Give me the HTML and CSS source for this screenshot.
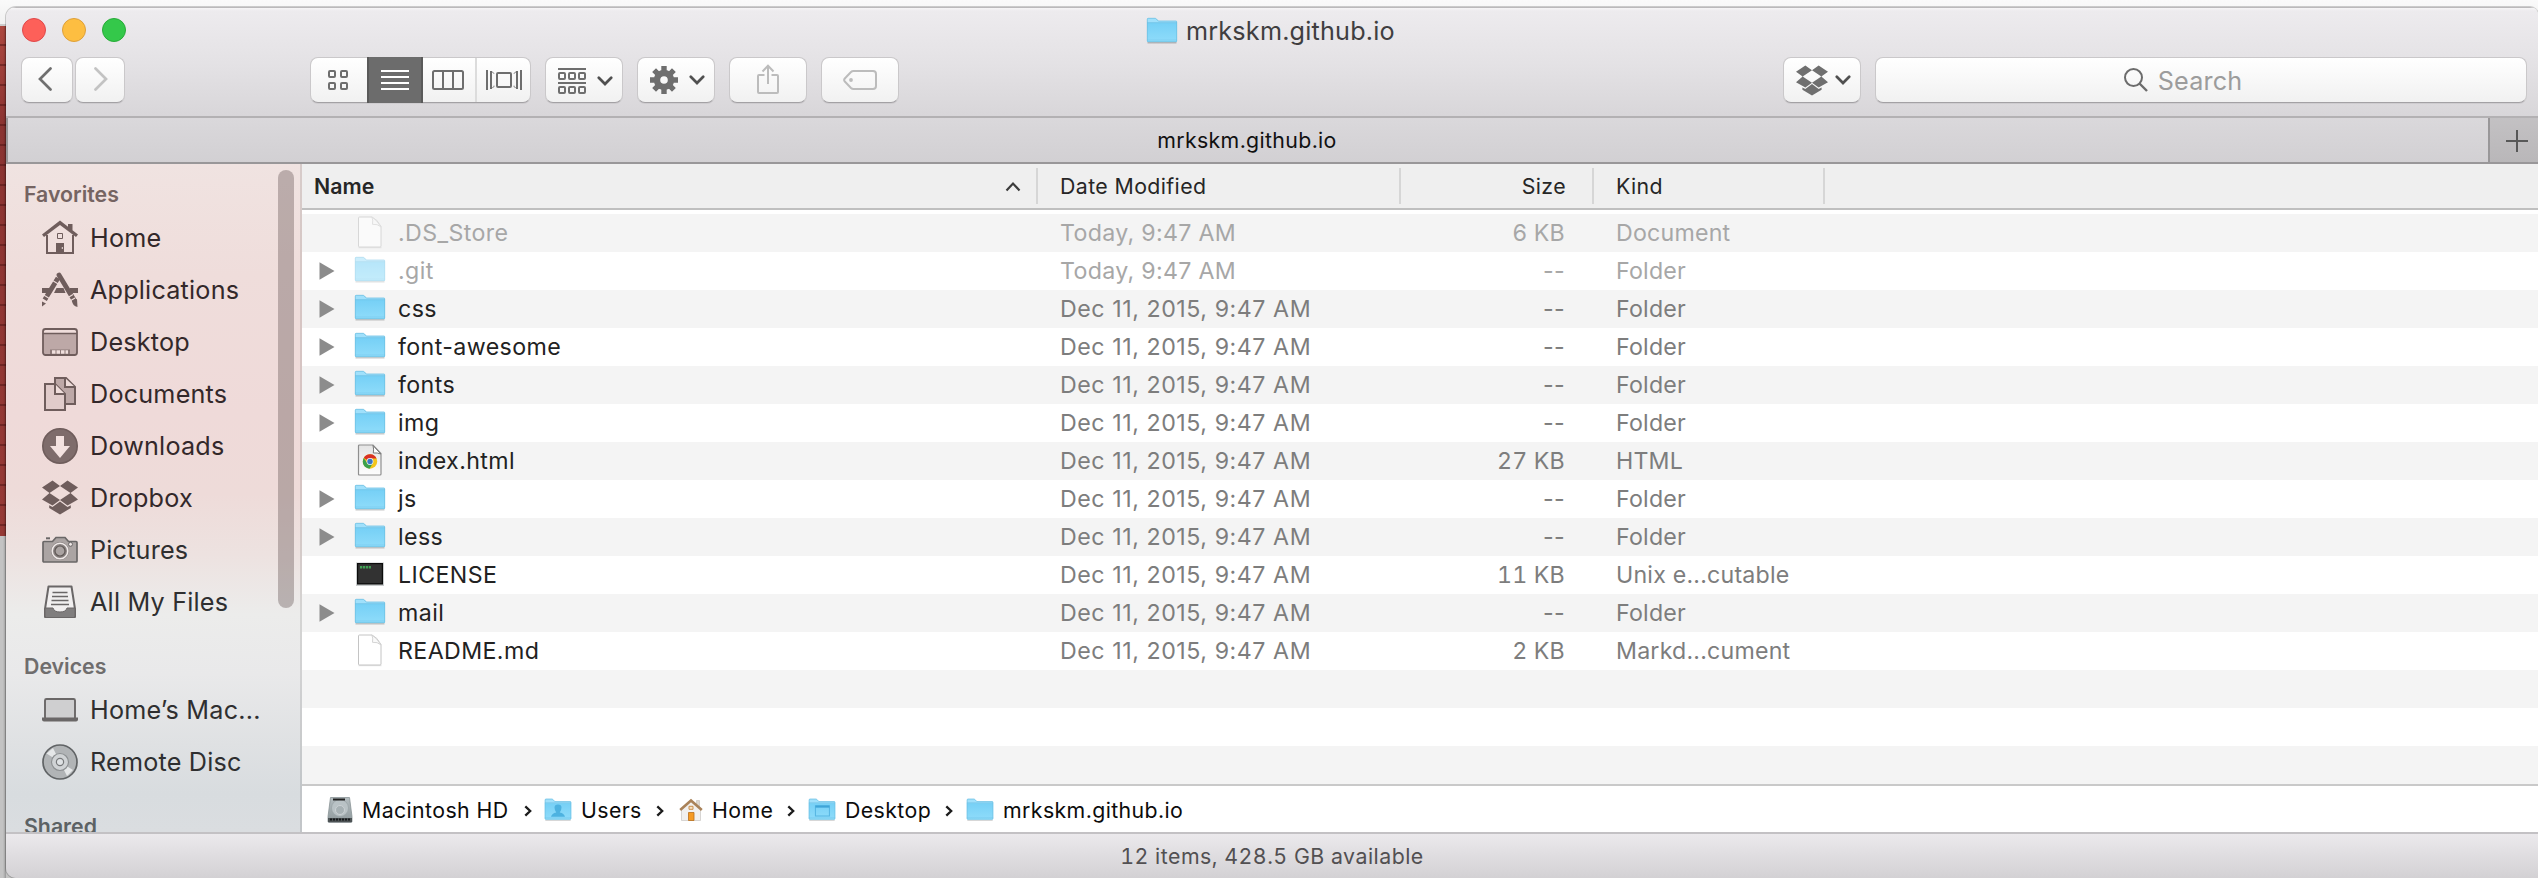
FILE: index.html
```html
<!DOCTYPE html>
<html lang="en">
<head>
<meta charset="utf-8">
<title>mrkskm.github.io</title>
<link rel="stylesheet" href="styles.css">
</head>
<body>
<svg class="defs" width="0" height="0" aria-hidden="true">
  <defs>
    <linearGradient id="fold" x1="0" y1="0" x2="0" y2="1"><stop offset="0" stop-color="#76d0f6"/><stop offset="1" stop-color="#8fdcfa"/></linearGradient>
    <linearGradient id="page" x1="0" y1="0" x2="0" y2="1"><stop offset="0" stop-color="#e4e4e4"/><stop offset="1" stop-color="#fdfdfd"/></linearGradient>
    <linearGradient id="metal" x1="0" y1="0" x2="0" y2="1"><stop offset="0" stop-color="#b4bdc0"/><stop offset="1" stop-color="#8f999c"/></linearGradient>
  </defs>
  <symbol id="folder" viewBox="0 0 32 28">
    <path d="M1.5 25.8h29" stroke="#000" stroke-opacity=".22" stroke-width="1.4"/>
    <path d="M1 2.2Q1 1 2.2 1H9q1 0 1.6.7L12.500 3.800H30Q31 3.800 31 4.800V24q0 1-1 1H2q-1 0-1-1z" fill="#a0e0fb"/>
    <path d="M1 6h30v18q0 1-1 1H2q-1 0-1-1z" fill="url(#fold)"/>
    <path d="M1 5.700h30" stroke="#69bfe4" stroke-width=".8"/>
    <path d="M1 23h30" stroke="#7bcdf0" stroke-width=".8"/>
    <path d="M1.300 24V2.200q0-.9.900-.9H9q.8 0 1.400.7l1.900 2.100H30q.7 0 .7.900v19q0 .7-.7.7H2q-.7 0-.7-.7z" fill="none" stroke="#6bbde0" stroke-width=".7"/>
  </symbol>
  <symbol id="doc" viewBox="0 0 26 33">
    <path d="M1.500 31.700h23" stroke="#000" stroke-opacity=".12"/>
    <path d="M2.500 1h12.500q5 2 9 9.500V30q0 1-1 1H2.500q-1 0-1-1V2q0-1 1-1z" fill="#fff" stroke="#c4c4c4" stroke-width="1"/>
    <path d="M14.800 1q1.500 2.500.7 7.300 5-.5 8.300 2.500Q20 4 14.800 1z" fill="#fafafa" stroke="#cfcfcf" stroke-width=".9"/>
  </symbol>
  <symbol id="chromedoc" viewBox="0 0 26 33">
    <path d="M2.500 1h13.500l8 8.500V30q0 1-1 1H2.500q-1 0-1-1V2q0-1 1-1z" fill="url(#page)" stroke="#8f8f8f" stroke-width="1.200"/>
    <path d="M16 1.500q1 3.500.3 7.500 4-.5 7.500 1z" fill="#fff" stroke="#777" stroke-width="1"/>
    <circle cx="13" cy="17.500" r="7.200" fill="#f3c51b"/>
    <path d="M13 17.500 6.760 13.900A7.200 7.200 0 0 1 19.600 14.600L13 14.600z" fill="#d93025"/>
    <path d="M6.760 13.900A7.200 7.200 0 0 0 12.500 24.700L15.800 19.200 13 17.500 10.200 19z" fill="#3aa04b"/>
    <circle cx="13" cy="17.500" r="3.400" fill="#f4f4f4"/>
    <circle cx="13" cy="17.500" r="2.700" fill="#3b76c4"/>
  </symbol>
  <symbol id="exec" viewBox="0 0 30 26">
    <rect x="1" y="1.500" width="28" height="23.500" fill="#c9cccd"/>
    <rect x="2" y="2" width="26" height="21.500" fill="#0c0c0c"/>
    <rect x="3.200" y="3.200" width="23.600" height="19" fill="#323232"/>
    <path d="M5 6.300h11" stroke="#42a255" stroke-width="2.400" stroke-dasharray="2.200 .7"/>
  </symbol>
  <symbol id="tri" viewBox="0 0 16 18"><path d="M.5.200v17.600L15.500 9z" fill="#8c8c8c"/></symbol>
  <symbol id="down" viewBox="0 0 16 10"><path d="M1.800 1.800 8 8l6.200-6.200" fill="none" stroke="#505050" stroke-width="2.700" stroke-linecap="round" stroke-linejoin="miter"/></symbol>
  <symbol id="dropbox" viewBox="0 0 36 35">
    <g fill="currentColor">
      <path d="M10.500.500 18 6 7.500 13 0 7.500zM25.500.500 18 6l10.500 7L36 7.500z"/>
      <path d="M7.500 13 18 20l-7.500 5.500L0 19.500zM28.500 13 18 20l7.500 5.500 10.500-6z"/>
      <path d="M18 21.500 25.500 27l3.300-1.700V28L18 34.500 7.200 28v-2.700L10.500 27z"/>
    </g>
    <path d="M7.500 13.300v-.6M28.500 13.300v-.6" stroke="currentColor"/>
  </symbol>
  <symbol id="sep" viewBox="0 0 8 12"><path d="M1.300 1.300 6.200 6l-4.900 4.700" fill="none" stroke="#1c1c1c" stroke-width="2.300"/></symbol>
</svg>

<div class="desktop">
  <div class="window">
    <header class="titlebar">
      <div class="titlerow">
        <div class="lights"><i class="light red"></i><i class="light yellow"></i><i class="light green"></i></div>
        <div class="title"><svg width="32" height="28"><use href="#folder"/></svg><span class="title-text">mrkskm.github.io</span></div>
      </div>
      <div class="toolbar">
        <button class="btn back"><svg width="14" height="24" viewBox="0 0 14 24"><path d="M12.500 1.500 2 12l10.500 10.500" fill="none" stroke="#6f6f6f" stroke-width="2.700" stroke-linecap="round"/></svg></button>
        <button class="btn fwd"><svg width="14" height="24" viewBox="0 0 14 24"><path d="M1.500 1.500 12 12 1.500 22.500" fill="none" stroke="#c3c3c3" stroke-width="2.700" stroke-linecap="round"/></svg></button>
        <div class="btn views">
          <span class="seg seg-icon"><svg width="20" height="20" viewBox="0 0 20 20" fill="none" stroke="#6e6e6e" stroke-width="2"><rect x="1" y="1" width="6" height="6" rx="1"/><rect x="13" y="1" width="6" height="6" rx="1"/><rect x="1" y="13" width="6" height="6" rx="1"/><rect x="13" y="13" width="6" height="6" rx="1"/></svg></span>
          <span class="seg seg-list"><svg width="28" height="20" viewBox="0 0 28 20"><path d="M0 1h28M0 7h28M0 13h28M0 19h28" stroke="#fff" stroke-width="2"/></svg></span>
          <span class="seg seg-col"><svg width="32" height="20" viewBox="0 0 32 20" fill="none" stroke="#6e6e6e" stroke-width="2"><rect x="1" y="1" width="30" height="18" rx="1.500"/><path d="M11 1v18M21 1v18"/></svg></span>
          <span class="seg seg-flow"><svg width="36" height="20" viewBox="0 0 36 20" fill="none" stroke="#6e6e6e" stroke-width="2"><path d="M1 0v20M35 0v20M5 1v18M31 1v18"/><path d="M6 1.500l2 2.200v12.600l-2 2.200M30 1.500l-2 2.200v12.600l2 2.200" stroke-width="1" stroke-dasharray="3 12 3"/><rect x="11" y="3" width="14" height="14" rx="1"/></svg></span>
        </div>
        <button class="btn drop arrange"><svg width="28" height="26" viewBox="0 0 28 26" fill="none" stroke="#6e6e6e" stroke-width="2"><path d="M0 1h28M0 15h28"/><rect x="1" y="5" width="6" height="6" rx="1"/><rect x="11" y="5" width="6" height="6" rx="1"/><rect x="21" y="5" width="6" height="6" rx="1"/><rect x="1" y="19" width="6" height="6" rx="1"/><rect x="11" y="19" width="6" height="6" rx="1"/><rect x="21" y="19" width="6" height="6" rx="1"/></svg><svg width="16" height="10"><use href="#down"/></svg></button>
        <button class="btn drop action"><svg width="28" height="28" viewBox="0 0 28 28"><g stroke="#6e6e6e" stroke-width="5.400"><path d="M14 0v8M14 20v8M0 14h8M20 14h8M4.100 4.100l6 6M17.900 17.900l6 6M23.900 4.100l-6 6M10.100 17.900l-6 6"/></g><circle cx="14" cy="14" r="7" fill="none" stroke="#6e6e6e" stroke-width="6.400"/></svg><svg width="16" height="10"><use href="#down"/></svg></button>
        <button class="btn share"><svg width="22" height="30" viewBox="0 0 22 30" fill="none" stroke="#bcbcbc" stroke-width="2"><path d="M7.500 11H2q-1 0-1 1v16q0 1 1 1h18q1 0 1-1V12q0-1-1-1h-5.500M11 1.500V20M5.500 7.500 11 1.800l5.500 5.700"/></svg></button>
        <button class="btn tag"><svg width="34" height="20" viewBox="0 0 34 20" fill="none" stroke="#bcbcbc" stroke-width="2"><path d="M10.500 1H30q3 0 3 3v12q0 3-3 3H10.500Q9 19 8 18L1.800 11.500q-1.300-1.500 0-3L8 2Q9 1 10.500 1z"/><circle cx="8" cy="10" r="1.900" fill="#bcbcbc" stroke="none"/></svg></button>
        <button class="btn drop dbx"><svg class="ink" width="32" height="31" viewBox="0 0 36 35" preserveAspectRatio="none"><use href="#dropbox"/></svg><svg width="16" height="10"><use href="#down"/></svg></button>
        <div class="btn search"><svg width="24" height="24" viewBox="0 0 24 24" fill="none" stroke="#6c6c6c" stroke-width="2"><circle cx="9.500" cy="9.500" r="8.500"/><path d="M15.500 15.500 23 23" stroke-width="2.400"/></svg><span class="search-text">Search</span></div>
      </div>
    </header>
    <div class="tabs">
      <div class="tab"><span class="tab-text">mrkskm.github.io</span></div>
      <div class="newtab"><svg width="22" height="22" viewBox="0 0 22 22"><path d="M11 0v22M0 11h22" stroke="#585858" stroke-width="2"/></svg></div>
    </div>
    <div class="body">
      <aside class="sidebar">
        <h2 class="group first">Favorites</h2>
        <div class="item"><svg class="sico" viewBox="0 0 36 36"><path d="M5 15v18h26V15" fill="none" stroke="currentColor" stroke-width="2"/><path d="M0 14.500 18 .500l8 6.200V4h4.500v6.300L36 14.500l-2 2.600L18 5 2 17.100z" fill="currentColor"/><path d="M14 23h8v11h-8z" fill="currentColor"/><path d="M15.500 13.500h5v5h-5z" fill="none" stroke="currentColor"/><path d="M20.300 27v2" stroke="#efe0de"/></svg><span>Home</span></div>
        <div class="item"><svg class="sico" viewBox="0 0 36 36"><path d="M0 16h8v5H0zM28 16h8v5h-8zM14.500 16h7l2 5H12z" fill="currentColor"/><path d="M16 6 2 29" stroke="currentColor" stroke-width="4.800" stroke-dasharray="4.500 1 16 1 3"/><path d="M0 34.500v-5l4 2z" fill="currentColor"/><path d="M17 3 32 28" stroke="currentColor" stroke-width="4.800" stroke-linecap="round"/><path d="M26 25.500l5-3M28 29l5-3" stroke="#efdddb" stroke-width="1.200"/><path d="M30 29l5-2 .5 8q-5-1-5.500-6z" fill="currentColor"/></svg><span>Applications</span></div>
        <div class="item"><svg class="sico" viewBox="0 0 36 36"><rect x="1" y="5" width="34" height="26" rx="2.500" fill="#efdddb"/><path d="M1 10h34v19q0 2-2 2H3q-2 0-2-2z" fill="#bda8a7"/><path d="M1 9.500h34" stroke="currentColor" stroke-width="1.500"/><rect x="1" y="5" width="34" height="26" rx="2.500" fill="none" stroke="currentColor" stroke-width="1.800"/><path d="M8 25.500h20V30H8z" fill="#8d7a79"/><path d="M10 28h16" stroke="#f0dfdd" stroke-width="3.500" stroke-dasharray="3.500 1"/></svg><span>Desktop</span></div>
        <div class="item"><svg class="sico" viewBox="0 0 36 36" stroke="currentColor" stroke-width="2"><path d="M13 2h11l9 9v17H13z" fill="#bda8a7"/><path d="M23 2v9h10" fill="#eddbd9"/><path d="M3 8h10l10 10v16H3z" fill="#e0cbca"/><path d="M13 8v10h10" fill="#efdddb"/></svg><span>Documents</span></div>
        <div class="item"><svg class="sico" viewBox="0 0 36 36"><circle cx="18" cy="18" r="17.200" fill="#7e6c6b" stroke="currentColor" stroke-width="1.600"/><path d="M14 8h8v10h6L18 30 8 18h6z" fill="#f3e2e0"/></svg><span>Downloads</span></div>
        <div class="item"><svg class="sico" viewBox="0 0 36 36"><use href="#dropbox" width="36" height="35"/></svg><span>Dropbox</span></div>
        <div class="item neutral"><svg class="sico" viewBox="0 0 36 36"><path d="M1 10.500q0-1 1-1h8.500L14 5.500h9l3.500 4H34q1 0 1 1V29q0 1-1 1H2q-1 0-1-1z" fill="#aba4a3" stroke="currentColor" stroke-width="1.700"/><path d="M4 6.300h4" stroke="currentColor" stroke-width="2"/><circle cx="18" cy="19" r="9" fill="#827b7a"/><circle cx="18" cy="19" r="7.800" fill="#8a8382" stroke="#f0eae9" stroke-width="1.600"/><circle cx="18" cy="19" r="5" fill="#aaa3a2" stroke="#605957" stroke-width="1.200"/><circle cx="28.500" cy="12.300" r="2" fill="#efe7e6" stroke="currentColor"/></svg><span>Pictures</span></div>
        <div class="item neutral"><svg class="sico" viewBox="0 0 36 36"><path d="M6.500 2.500h23L33 25v8H3v-8z" fill="#f1efef" stroke="currentColor" stroke-width="2" stroke-linejoin="round"/><path d="M10.500 8.500h15M10 12.500h16M9.500 16.500h17M9 20.500h18" stroke="currentColor" stroke-width="1.700"/><path d="M3 24h8q1 4 7 4t7-4h8v8q0 1.500-1.500 1.500h-27Q3 33.500 3 32z" fill="#807e7e" stroke="currentColor"/></svg><span>All My Files</span></div>
        <h2 class="group neutral">Devices</h2>
        <div class="item neutral"><svg class="sico" viewBox="0 0 36 36"><rect x="3" y="7" width="30" height="20" rx="1.500" fill="#cfcfd0" stroke="currentColor" stroke-width="1.900"/><path d="M0 25.500h36v2q0 2-2 2H2q-2 0-2-2z" fill="currentColor"/></svg><span>Home’s Mac...</span></div>
        <div class="item neutral"><svg class="sico" viewBox="0 0 36 36"><circle cx="18" cy="18" r="17" fill="#b1b4b6" stroke="#606365" stroke-width="1.700"/><path d="M18 18 4.500 9.500 11 4zM18 18 31 26l-6 6z" fill="#e5e7e8"/><circle cx="18" cy="18" r="8.500" fill="#d0d3d5" stroke="#8d9092" stroke-width="1.200"/><circle cx="18" cy="18" r="3.600" fill="#dfe2e4" stroke="#77797b" stroke-width="1.200"/></svg><span>Remote Disc</span></div>
        <h2 class="group cool">Shared</h2>
        <div class="scroller"></div>
      </aside>
      <main class="content">
        <div class="heads">
          <div class="h-name"><span>Name</span><svg width="16" height="11" viewBox="0 0 16 11"><path d="M1.500 9.500 8 2.500l6.500 7" fill="none" stroke="#3c3c3c" stroke-width="2.200"/></svg></div>
          <div class="h-date">Date Modified</div>
          <div class="h-size">Size</div>
          <div class="h-kind">Kind</div>
        </div>
        <div class="rows">
          <div class="row dim"><i class="tri"></i><span class="ico"><svg class="faded-doc" width="26" height="33"><use href="#doc"/></svg></span><span class="name">.DS_Store</span><span class="date">Today, 9:47 AM</span><span class="size">6 KB</span><span class="kind">Document</span></div>
          <div class="row dim"><svg class="tri"><use href="#tri"/></svg><span class="ico"><svg class="faded" width="32" height="28"><use href="#folder"/></svg></span><span class="name">.git</span><span class="date">Today, 9:47 AM</span><span class="size dash">--</span><span class="kind">Folder</span></div>
          <div class="row"><svg class="tri"><use href="#tri"/></svg><span class="ico"><svg width="32" height="28"><use href="#folder"/></svg></span><span class="name">css</span><span class="date">Dec 11, 2015, 9:47 AM</span><span class="size dash">--</span><span class="kind">Folder</span></div>
          <div class="row"><svg class="tri"><use href="#tri"/></svg><span class="ico"><svg width="32" height="28"><use href="#folder"/></svg></span><span class="name">font-awesome</span><span class="date">Dec 11, 2015, 9:47 AM</span><span class="size dash">--</span><span class="kind">Folder</span></div>
          <div class="row"><svg class="tri"><use href="#tri"/></svg><span class="ico"><svg width="32" height="28"><use href="#folder"/></svg></span><span class="name">fonts</span><span class="date">Dec 11, 2015, 9:47 AM</span><span class="size dash">--</span><span class="kind">Folder</span></div>
          <div class="row"><svg class="tri"><use href="#tri"/></svg><span class="ico"><svg width="32" height="28"><use href="#folder"/></svg></span><span class="name">img</span><span class="date">Dec 11, 2015, 9:47 AM</span><span class="size dash">--</span><span class="kind">Folder</span></div>
          <div class="row"><i class="tri"></i><span class="ico"><svg width="26" height="33"><use href="#chromedoc"/></svg></span><span class="name">index.html</span><span class="date">Dec 11, 2015, 9:47 AM</span><span class="size">27 KB</span><span class="kind">HTML</span></div>
          <div class="row"><svg class="tri"><use href="#tri"/></svg><span class="ico"><svg width="32" height="28"><use href="#folder"/></svg></span><span class="name">js</span><span class="date">Dec 11, 2015, 9:47 AM</span><span class="size dash">--</span><span class="kind">Folder</span></div>
          <div class="row"><svg class="tri"><use href="#tri"/></svg><span class="ico"><svg width="32" height="28"><use href="#folder"/></svg></span><span class="name">less</span><span class="date">Dec 11, 2015, 9:47 AM</span><span class="size dash">--</span><span class="kind">Folder</span></div>
          <div class="row"><i class="tri"></i><span class="ico"><svg width="30" height="26"><use href="#exec"/></svg></span><span class="name">LICENSE</span><span class="date">Dec 11, 2015, 9:47 AM</span><span class="size">11 KB</span><span class="kind">Unix e...cutable</span></div>
          <div class="row"><svg class="tri"><use href="#tri"/></svg><span class="ico"><svg width="32" height="28"><use href="#folder"/></svg></span><span class="name">mail</span><span class="date">Dec 11, 2015, 9:47 AM</span><span class="size dash">--</span><span class="kind">Folder</span></div>
          <div class="row"><i class="tri"></i><span class="ico"><svg width="26" height="33"><use href="#doc"/></svg></span><span class="name">README.md</span><span class="date">Dec 11, 2015, 9:47 AM</span><span class="size">2 KB</span><span class="kind">Markd...cument</span></div>
          <div class="row"></div>
          <div class="row"></div>
          <div class="row"></div>
        </div>
        <nav class="path">
          <span class="crumb c-disk"><svg width="26" height="28" viewBox="0 0 26 28"><path d="M3.500 1.500h19L25 20.500v5q0 .8-.8.8H1.800q-.8 0-.8-.8v-5z" fill="url(#metal)" stroke="#899396" stroke-width=".8"/><ellipse cx="13" cy="12" rx="8.500" ry="8.500" fill="#b9c2c5" stroke="#98a2a5" stroke-width=".7"/><circle cx="13" cy="14" r="4.500" fill="#a7b1b4" stroke="#d0d6d8" stroke-width=".8"/><path d="M6 3.500h12" stroke="#222" stroke-width="2"/><path d="M1 22h24v3.500q0 .8-.8.8H1.800q-.8 0-.8-.8z" fill="#4c5254"/><path d="M3 23.500h20" stroke="#15181a" stroke-width="2" stroke-dasharray="2 1"/></svg><span>Macintosh HD</span></span>
          <svg class="sep"><use href="#sep"/></svg>
          <span class="crumb c-users"><svg width="28" height="24" viewBox="0 0 32 28" preserveAspectRatio="none"><use href="#folder"/><path d="M8 22q1-4 6-5-2-3-2-6 0-3.500 4-3.500t4 3.500q0 3-2 6 5 1 6 5z" fill="#4db2e0"/></svg><span>Users</span></span>
          <svg class="sep"><use href="#sep"/></svg>
          <span class="crumb c-home"><svg width="24" height="24" viewBox="0 0 24 24"><path d="M17.500 2.500h3V9h-3z" fill="#ddd8d2" stroke="#b9b2aa" stroke-width=".5"/><path d="M2.500 11 12 3l9.500 8v11.500h-19z" fill="#f1f0ef" stroke="#c9c6c3" stroke-width=".7"/><path d="M1.200 12 12 2.500 22.800 12" fill="none" stroke="#a98259" stroke-width="2.600"/><path d="M9.500 14.500h5.500v8H9.500z" fill="#f59a23" stroke="#b86f1d" stroke-width=".8"/><path d="M10 8.300h4v3h-4z" fill="#f7e3c5" stroke="#c98f4f"/></svg><span>Home</span></span>
          <svg class="sep"><use href="#sep"/></svg>
          <span class="crumb c-desk"><svg width="28" height="24" viewBox="0 0 32 28" preserveAspectRatio="none"><use href="#folder"/><path d="M8.500 9h16v12h-16z" fill="none" stroke="#57b6e2" stroke-width="1.200"/><path d="M8.500 10h16" stroke="#3fa5d8" stroke-width="2.500"/></svg><span>Desktop</span></span>
          <svg class="sep"><use href="#sep"/></svg>
          <span class="crumb c-last"><svg width="28" height="24" viewBox="0 0 32 28" preserveAspectRatio="none"><use href="#folder"/></svg><span>mrkskm.github.io</span></span>
        </nav>
      </main>
    </div>
    <footer class="status"><span>12 items, 428.5 GB available</span></footer>
  </div>
</div>
</body>
</html>
```

FILE: styles.css
```css
* { box-sizing: border-box; }
body { margin: 0; font-family: Inter, "Liberation Sans", sans-serif; }
.defs { position: absolute; }
svg { display: block; flex: none; }
.desktop {
  width: 2538px; height: 878px; overflow: hidden; padding: 7px 0 0 6px;
  background:
    linear-gradient(90deg, transparent 3px, rgba(0,0,0,.22) 6px) 0 26px / 6px 852px no-repeat,
    repeating-linear-gradient(180deg, transparent 0 18px, rgba(70,15,15,.45) 18px 20px) 0 26px / 6px 510px no-repeat,
    linear-gradient(180deg, #ad4840, #8a3331 20%, #963a36) 0 26px / 6px 510px no-repeat,
    linear-gradient(180deg, #fafafa 0, #f1f1f1 24px, #ccc 24px, #ccc 26px, #c3c3c3 26px) no-repeat;
}
.window { width: 2532px; height: 871px; border-radius: 10px 8px 0 10px; overflow: hidden; display: flex; flex-direction: column; box-shadow: 0 0 0 1px rgba(0,0,0,.18); }
.titlebar { flex: none; height: 111px; border-top: 1px solid #bbb9bb; border-bottom: 2px solid #b3b1b3; background: linear-gradient(180deg, #f6f5f6 0, #edebee 3px, #e4e2e5 55px, #d8d6d9 108px); }
.titlerow { height: 49px; display: flex; align-items: flex-start; }
.lights { display: flex; gap: 16px; padding: 10px 0 0 16px; width: 1140px; flex: none; }
.light { width: 24px; height: 24px; border-radius: 50%; }
.red { background: #fd6059; border: 1px solid #e0484a; }
.yellow { background: #fdbe41; border: 1px solid #dea03a; }
.green { background: #34c84a; border: 1px solid #28ab38; }
.title { display: flex; padding-top: 9px; }
.title-text { font-size: 25.200px; line-height: 28px; margin-left: 8px; color: #403e40; letter-spacing: .2px; }
.toolbar { display: flex; padding-left: 15px; height: 46px; }
.btn { flex: none; height: 46px; padding: 0; border: 1px solid #cac8ca; border-bottom-color: #a3a1a4; border-radius: 8px; background: linear-gradient(180deg, #fff, #f1f1f1); display: flex; align-items: center; justify-content: center; box-shadow: 0 1px 0 rgba(0,0,0,.06); }
.back { width: 52px; padding: 0 5px 2px 0; }
.fwd { width: 50px; margin-left: 2px; padding: 0 0 2px 2px; }
.views { width: 221px; margin-left: 185px; justify-content: flex-start; }
.seg { display: flex; align-items: center; justify-content: center; height: 46px; margin: -1px 0; flex: none; }
.seg-icon { width: 56px; padding-right: 2px; }
.seg-list { width: 56px; background: #6c6c6c; border-left: 2px solid #5a5a5a; border-right: 2px solid #5a5a5a; }
.seg-col { width: 52px; padding-right: 2px; }
.seg-flow { width: 55px; height: 44px; margin: 0; border-left: 2px solid #dcdcdc; }
.drop { width: 78px; justify-content: flex-start; padding-left: 12px; gap: 11px; }
.arrange { margin-left: 14px; padding-top: 2px; }
.action { margin-left: 14px; }
.share { width: 78px; margin-left: 14px; padding-bottom: 2px; }
.tag { width: 78px; margin-left: 14px; }
.dbx { margin-left: 884px; gap: 7px; }
.ink { color: #6f6f6f; }
.search { width: 652px; margin-left: 14px; gap: 10px; padding-right: 36px; }
.search-text { font-size: 25.200px; line-height: 30px; color: #9c9c9c; padding-top: 2px; letter-spacing: .15px; }
.tabs { flex: none; height: 46px; display: flex; border-bottom: 2px solid #999799; }
.tab { width: 2482px; display: flex; align-items: center; justify-content: center; border-left: 2px solid #999799; background: linear-gradient(180deg, #dad8db, #d2d0d3); }
.tab-text { font-size: 21.300px; line-height: 28px; color: #111; letter-spacing: .35px; margin-right: 2px; }
.newtab { width: 50px; border-left: 2px solid #999799; border-top: 0; background: linear-gradient(180deg, #c3c1c3, #b9b7b9); display: flex; align-items: center; padding: 2px 0 0 16px; }
.body { flex: none; height: 668px; display: flex; }
.sidebar { position: relative; width: 296px; height: 668px; overflow: hidden; border-right: 2px solid rgba(0,0,0,.1); background: linear-gradient(180deg, #f0e3e1 0, #efdddb 110px, #efdad9 250px, #eedbd9 330px, #ede2e0 390px, #ececeb 450px, #e9e9ea 510px, #dfe1e3 580px, #d8dcdf 630px, #dadde0 668px); }
.group { margin: 0; height: 56px; padding: 19px 0 0 18px; font-size: 21.300px; line-height: 38px; font-weight: 600; color: #756462; letter-spacing: 0; }
.group.first { height: 48px; padding-top: 11px; }
.group.neutral { color: #6f6d6d; }
.group.cool { color: #5c6264; }
.item { height: 52px; display: flex; align-items: center; padding-left: 36px; color: #6f5d5c; }
.item.neutral { color: #6a6767; }
.item span { margin-left: 12px; font-size: 25.200px; line-height: 32px; color: #33282a; white-space: nowrap; letter-spacing: .2px; }
.item.neutral span { color: #2f2f30; }
.sico { width: 36px; height: 36px; }
.scroller { position: absolute; left: 272px; top: 6px; width: 16px; height: 438px; border-radius: 8px; background: rgba(100,85,85,.38); }
.content { width: 2236px; display: flex; flex-direction: column; background: #fff; }
.heads { flex: none; height: 46px; border-bottom: 2px solid #bfbfbf; background: #efefef; padding: 4px 0; display: flex; font-size: 21.300px; line-height: 36px; color: #262626; letter-spacing: .4px; }
.heads > div { border-right: 2px solid #d6d6d6; flex: none; }
.h-name { width: 736px; display: flex; align-items: center; justify-content: space-between; padding: 0 15px 0 12px; font-weight: 600; }
.h-name span { letter-spacing: .1px; }
.h-date { width: 363px; padding-left: 22px; }
.h-size { width: 193px; text-align: right; padding-right: 26px; }
.h-kind { width: 231px; padding-left: 22px; }
.rows { padding-top: 4px; height: 574px; flex: none; }
.row { height: 38px; display: flex; align-items: center; font-size: 23.200px; line-height: 38px; color: #7d7d7d; white-space: nowrap; letter-spacing: .2px; }
.row:nth-child(odd) { background: #f4f4f4; }
.tri { flex: none; width: 16px; height: 18px; margin-left: 17px; }
.ico { width: 32px; margin-left: 19px; display: flex; justify-content: center; flex: none; }
.ico svg { margin-top: -2px; }
.name { width: 662px; margin-left: 12px; color: #222; flex: none; letter-spacing: .4px; }
.date { width: 350px; flex: none; letter-spacing: .55px; }
.dim .date { letter-spacing: .3px; }
.size { width: 155px; text-align: right; flex: none; font-variant-numeric: tabular-nums; letter-spacing: .2px; }
.dash { font-variant-numeric: normal; letter-spacing: .3px; }
.kind { margin-left: 51px; }
.dim, .dim .name { color: #a7a7a7; }
.faded { opacity: .52; }
.faded-doc { opacity: .6; }
.path { flex: none; height: 48px; border-top: 2px solid #c9c9c9; display: flex; align-items: center; padding-left: 25px; font-size: 21.300px; line-height: 30px; color: #0c0c0c; white-space: nowrap; letter-spacing: .4px; }
.crumb { display: flex; align-items: center; flex: none; padding-top: 1px; }
.crumb span { margin-left: 9px; }
.c-disk { width: 197px; }
.c-users, .c-home, .c-desk { margin-left: 12px; }
.c-users { width: 112px; }
.c-home { width: 108px; margin-left: 15px; }
.c-desk { width: 137px; margin-left: 13px; }
.c-last { margin-left: 13px; }
.sep { width: 8px; height: 12px; margin-top: 3px; }
.status { flex: none; height: 46px; border-top: 2px solid #c3c1c4; background: linear-gradient(180deg, #ebe9ec, #d3d1d4); display: flex; justify-content: center; font-size: 21.300px; line-height: 44px; color: #525052; letter-spacing: .5px; font-variant-numeric: tabular-nums; }
```
